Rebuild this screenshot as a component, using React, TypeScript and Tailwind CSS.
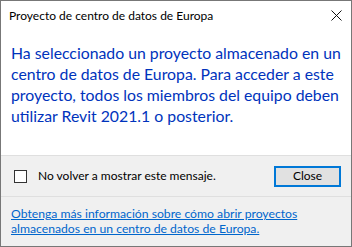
export default function App() {
  return (
    <div className="flex h-[247px] w-[352px] flex-col border border-[#777777] bg-white font-['Lato',sans-serif] text-black">
      {/* title bar */}
      <div className="flex h-[29px] shrink-0 items-center justify-between pl-[8px] pr-[9px]">
        <span className="text-[12px] leading-none">Proyecto de centro de datos de Europa</span>
        <svg width="11" height="11" viewBox="0 0 11 11">
          <path d="M0.5 0.5 L10.5 10.5 M10.5 0.5 L0.5 10.5" stroke="#111" strokeWidth="1" fill="none" />
        </svg>
      </div>

      {/* message */}
      <div className="h-[125px] shrink-0 px-[10px] pt-[12px]">
        <p className="text-[15.8px] leading-[21px] text-[#0033bc]">
          <span className="block whitespace-nowrap">Ha seleccionado un proyecto almacenado en un</span>
          <span className="block whitespace-nowrap">centro de datos de Europa. Para acceder a este</span>
          <span className="block whitespace-nowrap">proyecto, todos los miembros del equipo deben</span>
          <span className="block whitespace-nowrap">utilizar Revit 2021.1 o posterior.</span>
        </p>
      </div>

      {/* footer */}
      <div className="flex flex-1 flex-col border-t border-[#dfdfdf] bg-[#f0f0f0]">
        <div className="flex h-[40px] shrink-0 items-center justify-between pl-[13px] pr-[10px]">
          <label className="flex items-center gap-[11px] text-[12px] leading-none">
            <span className="h-[13px] w-[13px] border border-[#333333] bg-white" />
            <span>No volver a mostrar este mensaje.</span>
          </label>
          <button className="h-[21px] w-[67px] border-2 border-[#0078d7] bg-[#e1e1e1] text-[12px] leading-none">
            Close
          </button>
        </div>
        <div className="border-t border-[#dfdfdf] px-[10px] pt-[9px]">
          <a className="block text-[12.2px] leading-[15px] text-[#0066cc] underline">
            Obtenga más información sobre cómo abrir proyectos
            <br />
            almacenados en un centro de datos de Europa.
          </a>
        </div>
      </div>
    </div>
  );
}
